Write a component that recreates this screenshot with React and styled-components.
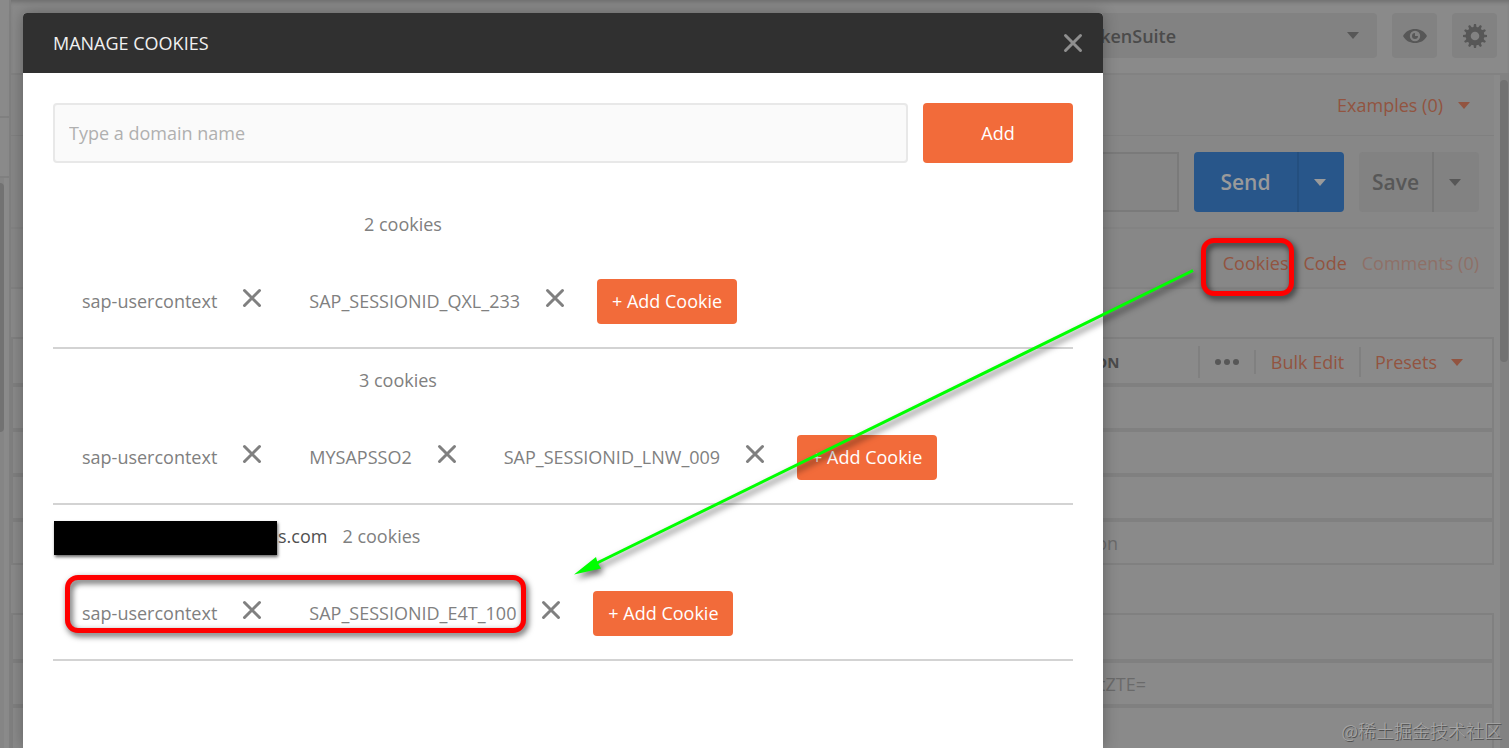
import React from 'react'
import styled, { createGlobalStyle, css } from 'styled-components'

const GlobalStyle = createGlobalStyle`
  *, *::before, *::after {
    box-sizing: border-box;
  }
  body {
    margin: 0;
    background-color: #8a8a8a;
    color: #505050;
    font-family: 'Open Sans', 'Noto Sans', sans-serif;
    font-size: 18px;
    line-height: 24px;
  }
  button, input, select {
    font: inherit;
    margin: 0;
  }
`

const domains = [
  { hiddenWidth: 296, cookies: ['sap-usercontext', 'SAP_SESSIONID_QXL_233'] },
  { hiddenWidth: 291, cookies: ['sap-usercontext', 'MYSAPSSO2', 'SAP_SESSIONID_LNW_009'] },
  { suffix: 's.com', cookies: ['sap-usercontext', 'SAP_SESSIONID_E4T_100'] }
]

function CloseIcon() {
  return (
    <svg width="20" height="20" viewBox="0 0 20 20" fill="none" stroke="currentColor" strokeWidth="3" strokeLinecap="round" aria-hidden="true">
      <path d="M2.5 2.5l15 15M17.5 2.5l-15 15" />
    </svg>
  )
}

function EyeIcon() {
  return (
    <svg width="24" height="16" viewBox="0 0 24 16" aria-hidden="true">
      <path d="M0 8C3 3 7 1 12 1s9 2 12 7c-3 5-7 7-12 7S3 13 0 8z" fill="#575757" />
      <circle cx="12" cy="8" r="5.2" fill="#828282" />
      <path d="M12 5a3 3 0 1 0 3 3h-3z" fill="#575757" />
    </svg>
  )
}

function GearIcon() {
  return (
    <svg width="24" height="24" viewBox="0 0 24 24" fill="none" stroke="#575757" aria-hidden="true">
      <circle cx="12" cy="12" r="6.8" strokeWidth="5" />
      {Array.from({ length: 12 }, (_, i) => (
        <path key={i} d="M10.4 3.5L11 0h2l.6 3.5z" fill="#575757" stroke="none" transform={`rotate(${i * 30} 12 12)`} />
      ))}
    </svg>
  )
}

function Domain({ hiddenWidth, suffix, cookies }) {
  return (
    <DomainBlock>
      <DomainHead>
        <DomainName $width={hiddenWidth}>
          {suffix && <Redaction />}
          {suffix}
        </DomainName>
        <span>{cookies.length} cookies</span>
      </DomainHead>
      <CookieList>
        {cookies.map(name => (
          <Cookie key={name}>
            {name}
            <RemoveButton aria-label={`Remove ${name}`}>
              <CloseIcon />
            </RemoveButton>
          </Cookie>
        ))}
        <AddCookieButton>+ Add Cookie</AddCookieButton>
      </CookieList>
    </DomainBlock>
  )
}

function CookiesModal() {
  return (
    <Modal role="dialog" aria-labelledby="modal-title">
      <ModalHeader>
        <ModalTitle id="modal-title">MANAGE COOKIES</ModalTitle>
        <CloseButton aria-label="Close">
          <CloseIcon />
        </CloseButton>
      </ModalHeader>
      <ModalBody>
        <DomainForm onSubmit={e => e.preventDefault()}>
          <DomainInput aria-label="Domain name" placeholder="Type a domain name" />
          <AddButton>Add</AddButton>
        </DomainForm>
        {domains.map((domain, i) => (
          <Domain key={i} {...domain} />
        ))}
      </ModalBody>
    </Modal>
  )
}

function RequestPane() {
  return (
    <Request>
      <ExamplesRow>
        <TextButton>
          Examples (0) <Caret />
        </TextButton>
      </ExamplesRow>
      <UrlRow>
        <UrlInput aria-label="Request URL" />
        <SplitButton $primary>
          <MainAction $width={103}>Send</MainAction>
          <MoreAction aria-label="Send options">
            <Caret />
          </MoreAction>
        </SplitButton>
        <SplitButton>
          <MainAction $width={73}>Save</MainAction>
          <MoreAction aria-label="Save options">
            <Caret />
          </MoreAction>
        </SplitButton>
      </UrlRow>
      <LinksRow>
        <PaneLink href="#cookies">Cookies</PaneLink>
        <PaneLink href="#code">Code</PaneLink>
        <PaneLink href="#comments" $faded>
          Comments (0)
        </PaneLink>
      </LinksRow>
      <ParamsTable>
        <thead>
          <tr>
            <HeadCell>
              <HeadContent>
                <HeadLabel>DESCRIPTION</HeadLabel>
                <HeadAction $width={56} $line={32} aria-label="Columns">
                  <Dots width="26" height="8" viewBox="0 0 26 8" aria-hidden="true">
                    <circle cx="4" cy="4" r="3" />
                    <circle cx="13" cy="4" r="3" />
                    <circle cx="22" cy="4" r="3" />
                  </Dots>
                </HeadAction>
                <HeadAction $width={105} $line={24}>
                  Bulk Edit
                </HeadAction>
                <HeadAction $width={118} $line={30}>
                  Presets <Caret />
                </HeadAction>
              </HeadContent>
            </HeadCell>
          </tr>
        </thead>
        <tbody>
          <tr>
            <Cell />
          </tr>
          <tr>
            <Cell />
          </tr>
          <tr>
            <Cell />
          </tr>
          <tr>
            <Cell $inset={374}>Description</Cell>
          </tr>
        </tbody>
      </ParamsTable>
      <ParamsTable>
        <thead>
          <tr>
            <HeadCell />
          </tr>
        </thead>
        <tbody>
          <tr>
            <Cell $inset={346}>bGljZW5zZTtZTE9DctZTE=</Cell>
          </tr>
          <tr>
            <Cell />
          </tr>
        </tbody>
      </ParamsTable>
    </Request>
  )
}

export default function App() {
  return (
    <Page>
      <GlobalStyle />
      <Sidebar>
        <SidebarHead />
        <SidebarItem />
        <SidebarList>
          <SidebarThumb />
        </SidebarList>
      </Sidebar>
      <Main>
        <TopBar>
          <Environment>
            <EnvironmentSelect aria-label="Environment">
              <option>TokenSuite</option>
            </EnvironmentSelect>
            <Caret />
          </Environment>
          <IconButton aria-label="Environment quick look">
            <EyeIcon />
          </IconButton>
          <IconButton aria-label="Manage environments">
            <GearIcon />
          </IconButton>
        </TopBar>
        <Columns>
          <RequestPane />
          <ScrollTrack>
            <ScrollThumb />
          </ScrollTrack>
        </Columns>
      </Main>
      <CookiesModal />
      <Highlight $left={65} $top={575} $width={461} $height={58} />
      <Highlight $left={1201} $top={238} $width={93} $height={58} />
      <Arrow width="640" height="330" viewBox="565 260 640 330" aria-hidden="true">
        <path d="M1193 270.5L596 563.5" stroke="#0f0" strokeWidth="3" />
        <path d="M574 574.500l22-17.500 1.500 5.500 3.500 6z" fill="#0f0" />
      </Arrow>
      <Watermark>@稀土掘金技术社区</Watermark>
    </Page>
  )
}

const line = '#808080'

const Page = styled.div`
  position: relative;
  display: flex;
  height: 100vh;
  overflow: hidden;
`

const Sidebar = styled.aside`
  display: flex;
  flex-direction: column;
  width: 11px;
  border-right: 2px solid ${line};
`

const SidebarHead = styled.div`
  height: 118px;
  border-bottom: 2px solid ${line};
`

const SidebarItem = styled.div`
  height: 60px;
  border-bottom: 2px solid ${line};
`

const SidebarList = styled.div`
  flex: 1;
  width: 4px;
  padding-top: 5px;
  background-color: #858585;
`

const SidebarThumb = styled.div`
  height: 249px;
  border-radius: 0 4px 4px 0;
  background-color: #727272;
`

const Main = styled.main`
  display: flex;
  flex: 1;
  flex-direction: column;
  min-width: 0;
`

const TopBar = styled.header`
  display: flex;
  justify-content: flex-end;
  gap: 15px;
  height: 75px;
  padding: 13px 12px 0 0;
  border-bottom: 2px solid #828282;
  box-shadow: inset 0 4px 4px -2px rgba(0, 0, 0, 0.2);
`

const Caret = styled.span`
  display: inline-block;
  border: 6px solid transparent;
  border-top: 7px solid currentColor;
  border-bottom: 0;
`

const Environment = styled.div`
  display: flex;
  align-items: center;
  width: 315px;
  height: 45px;
  padding-right: 18px;
  border-radius: 4px;
  background-color: #828282;
  color: #575757;
`

const EnvironmentSelect = styled.select`
  flex: 1;
  height: 45px;
  padding: 0 0 0 17px;
  border: 0;
  background: none;
  color: #4b4b4b;
  font-weight: 600;
  appearance: none;
`

const IconButton = styled.button`
  display: flex;
  align-items: center;
  justify-content: center;
  width: 45px;
  height: 45px;
  padding: 0;
  border: 0;
  border-radius: 4px;
  background-color: #828282;
`

const Columns = styled.div`
  display: flex;
  flex: 1;
  min-height: 0;
`

const Request = styled.section`
  flex: 1;
  min-width: 0;
  overflow: hidden;
`

const ScrollTrack = styled.div`
  width: 9px;
  margin-left: 6px;
  padding-top: 5px;
  background-color: #828282;
`

const ScrollThumb = styled.div`
  width: 8px;
  height: 282px;
  border-radius: 4px;
  background-color: #727272;
`

const ExamplesRow = styled.div`
  display: flex;
  align-items: center;
  justify-content: flex-end;
  height: 61px;
  padding-right: 24px;
  border-bottom: 1px solid ${line};
  background-color: #878787;
`

const TextButton = styled.button`
  display: flex;
  align-items: center;
  gap: 15px;
  padding: 0;
  border: 0;
  background: none;
  color: #925440;
`

const UrlRow = styled.div`
  display: flex;
  gap: 15px;
  height: 93px;
  padding: 16px 15px 0;
  border-bottom: 2px solid #838383;
  background-color: #878787;
`

const UrlInput = styled.input`
  flex: 1;
  height: 60px;
  border: 2px solid #7a7a7a;
  background-color: #858585;
`

const SplitButton = styled.div`
  display: flex;
  height: 60px;
  border-radius: 4px;
  overflow: hidden;
  background-color: #828282;
  color: #575757;

  ${props =>
    props.$primary &&
    css`
      background-color: #28568a;
      color: #9a9a9a;
    `}
`

const MainAction = styled.button`
  width: ${props => props.$width}px;
  padding: 0;
  border: 0;
  background: none;
  color: inherit;
  font-size: 21px;
  font-weight: 600;
`

const MoreAction = styled.button`
  display: flex;
  align-items: center;
  justify-content: center;
  width: 47px;
  padding: 0 3px 0 0;
  border: 0;
  border-left: 2px solid rgba(0, 0, 0, 0.08);
  background: none;
  color: inherit;
`

const LinksRow = styled.nav`
  display: flex;
  align-items: center;
  justify-content: flex-end;
  gap: 15px;
  height: 60px;
  padding: 10px 15px 0 0;
  border-bottom: 2px solid #828282;
  background-color: #878787;
`

const PaneLink = styled.a`
  color: ${props => (props.$faded ? '#8e7067' : '#925440')};
  text-decoration: none;
`

const ParamsTable = styled.table`
  width: 100%;
  margin-top: 48px;
  border: 2px solid ${line};
  border-spacing: 0;
  color: #6a6a6a;

  tbody tr:last-child td {
    height: 41px;
    border-bottom: 0;
  }
`

const HeadCell = styled.th`
  height: 48px;
  padding: 2px 0 0;
  border-bottom: 4px solid ${line};
  font-weight: 400;
`

const HeadContent = styled.div`
  display: flex;
  align-items: center;
  justify-content: flex-end;
  padding-right: 15px;
`

const HeadLabel = styled.span`
  width: 178px;
  text-align: left;
  color: #4b4b4b;
  font-size: 15px;
  font-weight: 700;
`

const HeadAction = styled.button`
  display: flex;
  align-items: center;
  justify-content: center;
  gap: 14px;
  width: ${props => props.$width}px;
  height: ${props => props.$line}px;
  padding: 0;
  border: 0;
  border-left: 2px solid ${line};
  background: none;
  color: #925440;
`

const Dots = styled.svg`
  fill: #575757;
`

const Cell = styled.td`
  height: 45px;
  padding: 0 ${props => props.$inset || 0}px 0 0;
  border-bottom: 4px solid ${line};
  text-align: right;
`

const Modal = styled.section`
  position: absolute;
  top: 13px;
  left: 23px;
  width: 1080px;
  max-width: calc(100% - 46px);
  min-height: calc(100vh - 13px);
  border-radius: 4px 4px 0 0;
  background-color: #fff;
  box-shadow: 0 0 15px rgba(0, 0, 0, 0.3);
`

const ModalHeader = styled.header`
  display: flex;
  align-items: center;
  justify-content: space-between;
  height: 60px;
  padding: 0 20px 0 30px;
  border-radius: 4px 4px 0 0;
  background-color: #303030;
`

const ModalTitle = styled.h1`
  margin: 0;
  color: #f0f0f0;
  font-size: 18px;
  font-weight: 500;
`

const RemoveButton = styled.button`
  display: flex;
  padding: 0;
  margin-bottom: 6px;
  border: 0;
  background: none;
  color: #808080;
`

const CloseButton = styled(RemoveButton)`
  margin-bottom: 0;
  color: #8f8f8f;
`

const ModalBody = styled.div`
  padding: 30px;
`

const DomainForm = styled.form`
  display: flex;
  gap: 15px;
  margin-bottom: 30px;
`

const DomainInput = styled.input`
  flex: 1;
  height: 60px;
  padding: 0 14px;
  border: 2px solid #e8e8e8;
  border-radius: 4px;
  background-color: #fafafa;
  outline: 0;

  &::placeholder {
    color: #b0b0b0;
    opacity: 1;
  }
`

const AddButton = styled.button`
  width: 150px;
  height: 60px;
  padding: 0;
  border: 0;
  border-radius: 4px;
  background-color: #f26b3a;
  color: #fff;
`

const AddCookieButton = styled(AddButton)`
  width: 140px;
  height: 45px;
  padding-bottom: 1px;
`

const DomainBlock = styled.section`
  padding-bottom: 23px;
  border-bottom: 2px solid #d3d3d3;
  color: #808080;
`

const DomainHead = styled.div`
  display: flex;
  align-items: center;
  gap: 15px;
  height: 62px;
  margin-bottom: 24px;
`

const DomainName = styled.div`
  display: flex;
  align-items: center;
  width: ${props => (props.$width ? `${props.$width}px` : 'auto')};
  color: #505050;
`

const Redaction = styled.span`
  width: 223px;
  height: 34px;
  margin: 4px 1px 0;
  background-color: #000;
  box-shadow: 1px 2px 3px rgba(0, 0, 0, 0.6);
`

const CookieList = styled.div`
  display: flex;
  align-items: center;
  padding-left: 29px;
`

const Cookie = styled.div`
  display: flex;
  align-items: center;
  gap: 25px;
  margin-right: 32px;
  padding-bottom: 1px;

  & + & {
    padding-left: 15px;
  }
`

const Highlight = styled.div`
  position: absolute;
  top: ${props => props.$top}px;
  left: ${props => props.$left}px;
  width: ${props => props.$width}px;
  height: ${props => props.$height}px;
  border: 5px solid #f00;
  border-radius: 13px;
  filter: drop-shadow(2px 3px 3px rgba(0, 0, 0, 0.7));
  pointer-events: none;
`

const Arrow = styled.svg`
  position: absolute;
  top: 260px;
  left: 565px;
  fill: none;
  filter: drop-shadow(2px 4px 3px rgba(0, 0, 0, 0.6));
  pointer-events: none;
`

const Watermark = styled.div`
  position: absolute;
  right: 7px;
  bottom: 6px;
  color: #a8a8a8;
  font-family: 'Noto Sans CJK SC', sans-serif;
  font-weight: 300;
  text-shadow: 1px 1px 0 #505050;
`
